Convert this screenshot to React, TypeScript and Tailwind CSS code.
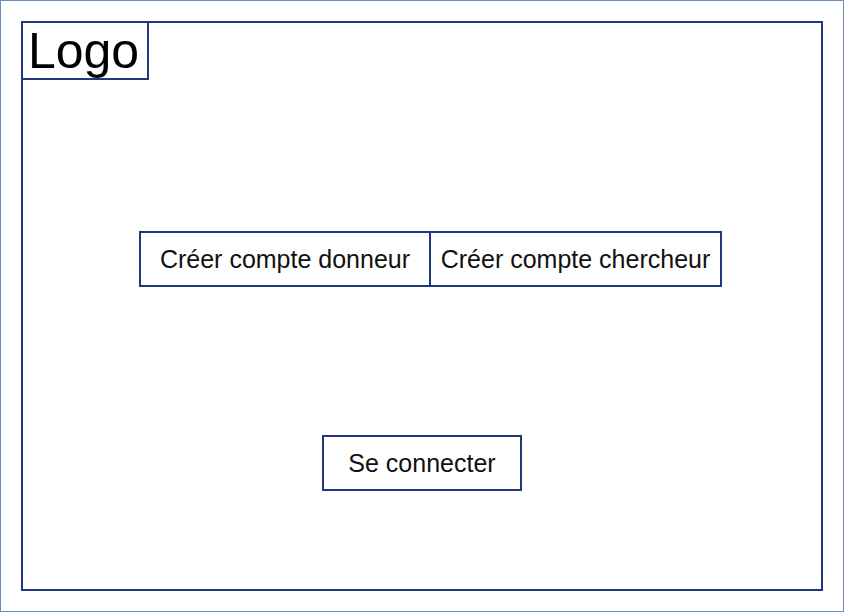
import React from "react";

export default function App() {
  const font = { fontFamily: '"Liberation Sans", Arial, sans-serif' };
  return (
    <div
      className="w-[844px] h-[612px] bg-white border border-[#6c8ebf] p-[20px] text-[#111]"
      style={font}
    >
      <div className="w-[802px] h-[570px] border-2 border-[#1f377d] flex flex-col">
        <div className="-mt-[2px] -ml-[2px] w-[128px] h-[59px] border-2 border-[#1f377d] flex items-center justify-center pr-[3px] text-[50px] leading-none text-black">
          Logo
        </div>
        <div className="flex mt-[151px] ml-[116px]">
          <button className="w-[292px] h-[56px] border-2 border-[#1f377d] bg-white text-[25px] pt-[2px] flex items-center justify-center">
            Créer compte donneur
          </button>
          <button className="-ml-[2px] w-[293px] h-[56px] border-2 border-[#1f377d] bg-white text-[25px] pt-[2px] flex items-center justify-center">
            Créer compte chercheur
          </button>
        </div>
        <div className="flex mt-[148px] ml-[299px]">
          <button className="w-[200px] h-[56px] border-2 border-[#1f377d] bg-white text-[25px] pt-[2px] flex items-center justify-center">
            Se connecter
          </button>
        </div>
      </div>
    </div>
  );
}
